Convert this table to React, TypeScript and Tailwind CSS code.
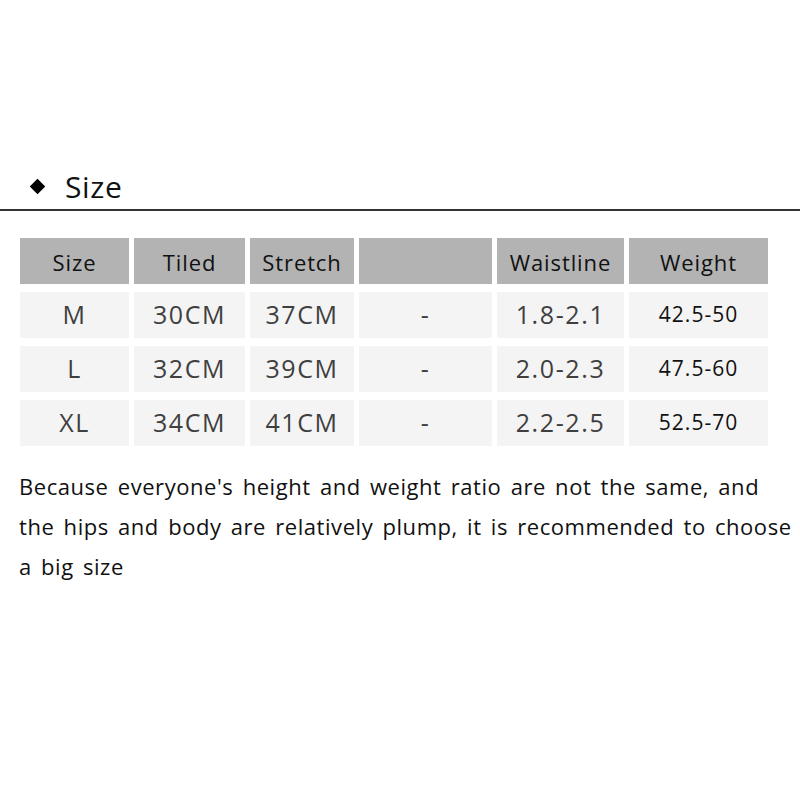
const header = ["Size", "Tiled", "Stretch", "", "Waistline", "Weight"];

const rows = [
  ["M", "30CM", "37CM", "-", "1.8-2.1", "42.5-50"],
  ["L", "32CM", "39CM", "-", "2.0-2.3", "47.5-60"],
  ["XL", "34CM", "41CM", "-", "2.2-2.5", "52.5-70"],
];

const widths = ["w-[109px]", "w-[111px]", "w-[104px]", "w-[133px]", "w-[127px]", "w-[139px]"];

export default function App() {
  return (
    <div className="w-[800px] h-[800px] bg-white font-['Open_Sans',sans-serif] text-[#111]">
      <div className="pt-[164px] flex items-center h-[209px] pl-[32px] gap-[22px]">
        <div className="w-[11px] h-[11px] bg-black rotate-45" />
        <span className="text-[30px] leading-[44px] tracking-[0.6px]">Size</span>
      </div>
      <div className="h-[2px] bg-[#333]" />

      <div className="mt-[27px] ml-[20px] flex flex-col gap-[8px]">
        <div className="flex gap-[5px]">
          {header.map((h, i) => (
            <div
              key={i}
              className={`${widths[i]} h-[46px] bg-[#b3b3b3] flex items-center justify-center text-[22px] tracking-[0.9px] pt-[2px]`}
            >
              {h}
            </div>
          ))}
        </div>
        {rows.map((r, ri) => (
          <div key={ri} className="flex gap-[5px]">
            {r.map((c, i) => (
              <div
                key={i}
                className={`${widths[i]} h-[46px] bg-[#f4f4f4] flex items-center justify-center ${
                  i === 5
                    ? "text-[21px] text-[#111] tracking-[1px]"
                    : "text-[25px] text-[#3f3f3f] tracking-[1.6px]"
                }`}
              >
                {c}
              </div>
            ))}
          </div>
        ))}
      </div>

      <p className="mt-[20px] pl-[19px] text-[22px] leading-[40px] tracking-[0.55px] [word-spacing:3px] text-[#111]">
        Because everyone's height and weight ratio are not the same, and the hips and body are relatively plump, it is recommended to choose a big size
      </p>
    </div>
  );
}
